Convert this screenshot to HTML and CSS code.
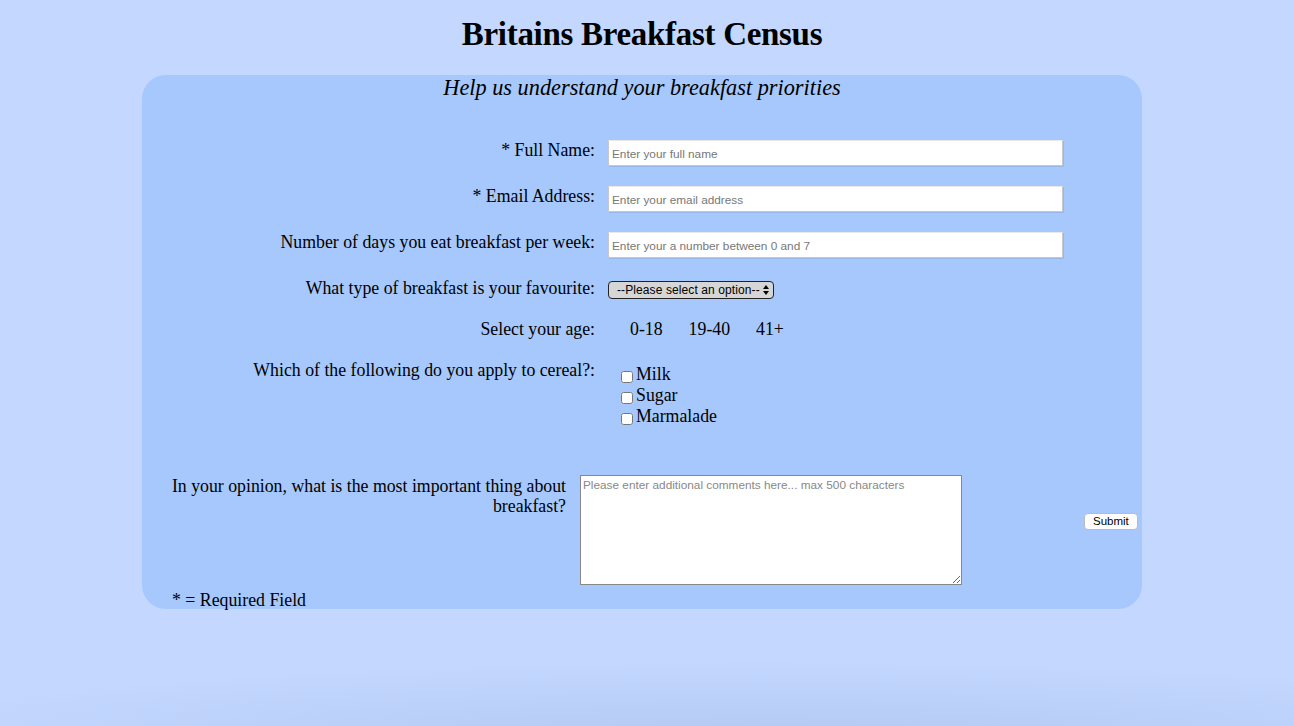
FILE: index.html
```html
<!DOCTYPE html>
<html lang="en">
<head>
<meta charset="utf-8">
<title>Britains Breakfast Census</title>
<link rel="stylesheet" href="styles.css">
</head>
<body>
<div class="page">
  <h1 class="title">Britains Breakfast Census</h1>
  <form class="card">
    <p class="subtitle">Help us understand your breakfast priorities</p>
    <div class="grid">
      <label class="lbl" for="name">* Full Name:</label>
      <div class="field"><input class="text" id="name" type="text" placeholder="Enter your full name"></div>

      <label class="lbl" for="email">* Email Address:</label>
      <div class="field"><input class="text" id="email" type="text" placeholder="Enter your email address"></div>

      <label class="lbl" for="days">Number of days you eat breakfast per week:</label>
      <div class="field"><input class="text" id="days" type="text" placeholder="Enter your a number between 0 and 7"></div>

      <label class="lbl lbl-select" for="fav">What type of breakfast is your favourite:</label>
      <div class="field"><select class="select" id="fav"><option>--Please select an option--</option></select></div>

      <span class="lbl lbl-age">Select your age:</span>
      <div class="field ages"><span>0-18</span><span>19-40</span><span>41+</span></div>

      <span class="lbl lbl-cereal">Which of the following do you apply to cereal?:</span>
      <div class="field checks">
        <label class="check"><input type="checkbox"><span>Milk</span></label>
        <label class="check"><input type="checkbox"><span>Sugar</span></label>
        <label class="check"><input type="checkbox"><span>Marmalade</span></label>
      </div>
    </div>
    <div class="comments">
      <label class="lbl lbl-comment" for="cm">In your opinion, what is the most important thing about breakfast?</label>
      <textarea class="area" id="cm" placeholder="Please enter additional comments here... max 500 characters"></textarea>
      <button class="submit" type="button">Submit</button>
    </div>
    <p class="required">* = Required Field</p>
  </form>
</div>
</body>
</html>
```

FILE: styles.css
```css
html, body {
  margin: 0;
  padding: 0;
  height: 100%;
}
body {
  background-color: #c3d7ff;
  background-image: radial-gradient(ellipse 900px 80px at 760px 740px, rgba(150, 175, 215, 0.35), rgba(150, 175, 215, 0) 100%);
  font-family: "Liberation Serif", "Times New Roman", serif;
  color: #000;
}
.page {
  padding: 0 10px 0 0;
  display: flex;
  flex-direction: column;
  align-items: center;
}
.title {
  margin: 14px 0 0;
  font-size: 33px;
  line-height: 40px;
  font-weight: bold;
  letter-spacing: -0.3px;
}
.card {
  box-sizing: border-box;
  width: 1000px;
  margin-top: 21px;
  height: 534px;
  background: #a6c8fc;
  border-radius: 24px;
  display: flex;
  flex-direction: column;
}
.subtitle {
  margin: 1px 0 0;
  text-align: center;
  font-style: italic;
  font-size: 22.3px;
  line-height: 24px;
}
.grid {
  margin-top: 40px;
  display: grid;
  grid-template-columns: 453px 455px;
  column-gap: 13px;
  row-gap: 20px;
}
.lbl {
  text-align: right;
  font-size: 17.8px;
  line-height: 20px;
}
.grid .lbl {
  padding-top: 0;
}
.field {
  display: flex;
}
.text {
  box-sizing: border-box;
  width: 455px;
  height: 26px;
  margin: 0;
  padding: 1px 3px 0;
  border: 1px solid #c8c8c8;
  border-top-color: #e8e8e8;
  box-shadow: 1px 1px 0 rgba(0, 0, 0, 0.08);
  background: #fff;
  font-family: "Liberation Sans", Arial, sans-serif;
  font-size: 11.8px;
  outline: none;
}
.text::placeholder {
  color: #777;
}
.grid .lbl-select {
  padding-top: 1px;
  margin-top: -1px;
}
.select {
  -webkit-appearance: none;
  appearance: none;
  box-sizing: border-box;
  width: 166px;
  height: 18px;
  margin-top: 3px;
  padding: 0 10px 0 8px;
  border: 1px solid #222;
  border-radius: 4px;
  background-color: #d6d6d6;
  background-image: url("data:image/svg+xml,%3Csvg xmlns='http://www.w3.org/2000/svg' width='6' height='10'%3E%3Cpath d='M3 0L6 4H0z M3 10L6 6H0z' fill='%23000'/%3E%3C/svg%3E");
  background-repeat: no-repeat;
  background-position: right 4px center;
  font-family: "Liberation Sans", Arial, sans-serif;
  font-size: 12px;
  letter-spacing: 0.1px;
  color: #000;
}
.grid .lbl-age {
  padding-top: 0;
}
.ages {
  gap: 26px;
  padding-left: 22px;
  font-size: 17.8px;
  line-height: 20px;
}
.grid .lbl-cereal {
  padding-top: 1px;
}
.checks {
  flex-direction: column;
  padding-left: 13px;
  padding-top: 5px;
}
.check {
  display: flex;
  align-items: center;
  font-size: 17.8px;
  line-height: 21px;
}
.check input {
  width: 12px;
  height: 12px;
  margin: 4px 3px 0 0;
}
.comments {
  margin-top: 48px;
  display: flex;
  align-items: flex-start;
  padding-left: 20px;
}
.lbl-comment {
  width: 404px;
  padding-top: 1px;
}
.area {
  box-sizing: border-box;
  width: 382px;
  height: 110px;
  margin: 0 0 0 14px;
  padding: 2px 2px;
  border: 1px solid #888;
  background: #fff;
  font-family: "Liberation Sans", Arial, sans-serif;
  font-size: 11.8px;
  resize: vertical;
}
.area::placeholder {
  color: #888;
}
.submit {
  margin: 38px 0 0 122px;
  height: 17px;
  padding: 0 8px;
  border: 1px solid #bbb;
  border-radius: 4px;
  background: #fff;
  font-family: "Liberation Sans", Arial, sans-serif;
  font-size: 11.5px;
  line-height: 15px;
  color: #000;
}
.required {
  margin: 5px 0 0 30px;
  font-size: 17.8px;
  line-height: 20px;
}
```
